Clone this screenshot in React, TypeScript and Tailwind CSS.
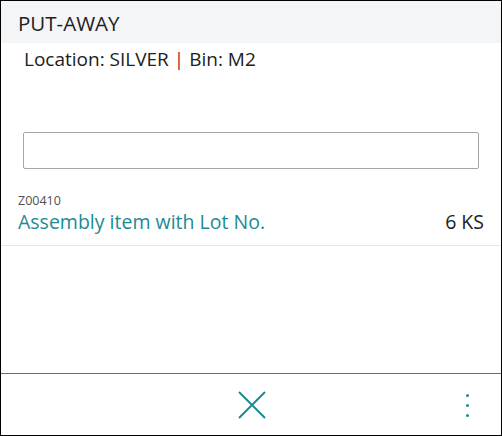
import React from "react";

export default function App() {
  return (
    <div
      className="w-[502px] h-[436px] border border-black bg-white flex flex-col text-[#212121]"
      style={{ fontFamily: '"Open Sans", "Noto Sans", sans-serif' }}
    >
      <div className="h-[42px] bg-[#f4f5f7] flex items-center pl-[17px] text-[20.5px] leading-none pt-[2px]">
        PUT-AWAY
      </div>
      <div className="pl-[23px] pt-[4px] text-[19px] leading-[24px]">
        Location: SILVER <span className="text-[#a4262c]">|</span> Bin: M2
      </div>
      <div className="px-[22px] mt-[61px]">
        <input
          type="text"
          className="w-full h-[37px] border border-[#a6a6a6] rounded-[2px] outline-none px-2"
        />
      </div>
      <div className="border-b border-[#e6e6e6] px-[17px] pt-[24px] pb-[10px]">
        <div className="text-[12.5px] leading-[16px] text-[#505050]">Z00410</div>
        <div className="flex justify-between items-baseline text-[19.5px] leading-[26px]">
          <span className="text-[#1d8a94]">Assembly item with Lot No.</span>
          <span className="text-[#212121]">6 KS</span>
        </div>
      </div>
      <div className="flex-1" />
      <div className="h-[62px] border-t border-[#6b6b6b] flex items-center relative">
        <div className="flex-1 flex justify-center pl-[2px]">
          <svg width="28" height="28" viewBox="0 0 28 28">
            <path d="M1 1 L27 27 M27 1 L1 27" stroke="#1d8a94" strokeWidth="2" fill="none" />
          </svg>
        </div>
        <div className="absolute right-[32px] top-[20px] flex flex-col gap-[7px]">
          <span className="w-[3px] h-[3px] rounded-full bg-[#1d8a94] block" />
          <span className="w-[3px] h-[3px] rounded-full bg-[#1d8a94] block" />
          <span className="w-[3px] h-[3px] rounded-full bg-[#1d8a94] block" />
        </div>
      </div>
    </div>
  );
}
